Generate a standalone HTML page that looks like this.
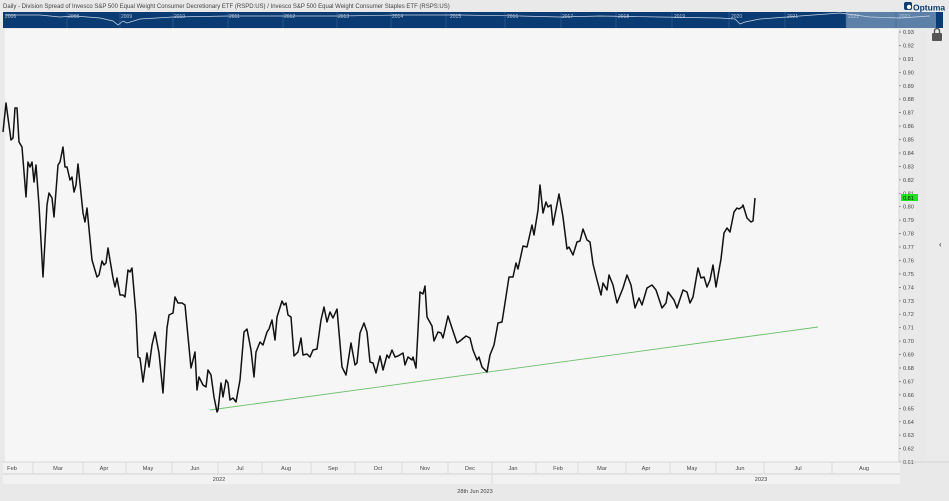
<!DOCTYPE html>
<html><head><meta charset="utf-8"><style>
html,body{margin:0;padding:0;background:#e9e9e9;width:949px;height:501px;overflow:hidden;font-family:"Liberation Sans",sans-serif}
svg{display:block}
</style></head><body>
<svg width="949" height="501" xmlns="http://www.w3.org/2000/svg" font-family="Liberation Sans, sans-serif">
<rect width="949" height="501" fill="#e9e9e9"/>
<text x="3" y="8" font-size="6" fill="#444">Daily - Division Spread of Invesco S&amp;P 500 Equal Weight Consumer Decretionary ETF (RSPD:US) / Invesco S&amp;P 500 Equal Weight Consumer Staples ETF (RSPS:US)</text>
<rect x="904" y="2" width="8" height="8" rx="2" fill="#0d3b72"/>
<circle cx="909" cy="7" r="2.2" fill="#fff"/>
<text x="913" y="10.5" font-size="8.5" font-weight="bold" fill="#0d3b72">Optuma</text>
<rect x="3" y="12" width="940" height="16" fill="#0b3b73"/>
<rect x="846" y="12" width="90" height="16" fill="#5d80a9"/>
<g stroke="#3a6394" stroke-width="0.6">
<line x1="67" y1="12" x2="67" y2="28"/><line x1="120" y1="12" x2="120" y2="28"/><line x1="173" y1="12" x2="173" y2="28"/><line x1="228" y1="12" x2="228" y2="28"/><line x1="283" y1="12" x2="283" y2="28"/><line x1="337" y1="12" x2="337" y2="28"/><line x1="391" y1="12" x2="391" y2="28"/><line x1="446" y1="12" x2="446" y2="28"/><line x1="505" y1="12" x2="505" y2="28"/><line x1="561" y1="12" x2="561" y2="28"/><line x1="616" y1="12" x2="616" y2="28"/><line x1="672" y1="12" x2="672" y2="28"/><line x1="729" y1="12" x2="729" y2="28"/><line x1="785" y1="12" x2="785" y2="28"/><line x1="846" y1="12" x2="846" y2="28"/><line x1="896" y1="12" x2="896" y2="28"/>
</g>
<g font-size="5" fill="#b8c8dc">
<text x="5" y="18">2006</text><text x="68" y="18">2008</text><text x="121" y="18">2009</text><text x="174" y="18">2010</text><text x="229" y="18">2011</text><text x="284" y="18">2012</text><text x="338" y="18">2013</text><text x="392" y="18">2014</text><text x="450" y="18">2015</text><text x="507" y="18">2016</text><text x="562" y="18">2017</text><text x="618" y="18">2018</text><text x="674" y="18">2019</text><text x="731" y="18">2020</text><text x="787" y="18">2021</text><text x="848" y="18">2022</text><text x="899" y="18">2023</text>
</g>
<polyline fill="none" stroke="#c9d6e6" stroke-width="0.7" points="5,15 40,15 60,17 75,16 100,18 113,21 118,25 123,21 127,23 140,19 173,17 230,16 290,16 340,16 400,15 460,15 520,16 560,17 600,16 660,17 720,18 735,19 740,24 745,22 760,19 800,16 840,13 870,17 900,18 930,16"/>
<rect x="5" y="29" width="894" height="433" fill="#f6f6f6"/>
<line x1="899" y1="29" x2="899" y2="462" stroke="#ccc" stroke-width="0.8"/>
<rect x="927" y="29" width="22" height="433" fill="#ebebeb"/>
<rect x="932" y="33" width="10" height="8" rx="1" fill="#555"/>
<path d="M934.5 33 v-2 a2.5 2.5 0 0 1 5 0 v2" fill="none" stroke="#555" stroke-width="1.4"/>
<text x="939" y="247" font-size="8" fill="#333">‹</text>
<g stroke="#777" stroke-width="0.7">
<path d="M899 32h2M899 45.4h2M899 58.9h2M899 72.3h2M899 85.8h2M899 99.2h2M899 112.6h2M899 126.1h2M899 139.5h2M899 153h2M899 166.4h2M899 179.8h2M899 193.3h2M899 206.7h2M899 220.2h2M899 233.6h2M899 247h2M899 260.5h2M899 273.9h2M899 287.4h2M899 300.8h2M899 314.2h2M899 327.7h2M899 341.1h2M899 354.6h2M899 368h2M899 381.4h2M899 394.9h2M899 408.3h2M899 421.8h2M899 435.2h2M899 448.6h2M899 462h2"/>
</g>
<g font-size="5.6" fill="#444">
<text x="903" y="34">0.93</text><text x="903" y="47.4">0.92</text><text x="903" y="60.9">0.91</text><text x="903" y="74.3">0.90</text><text x="903" y="87.8">0.89</text><text x="903" y="101.2">0.88</text><text x="903" y="114.6">0.87</text><text x="903" y="128.1">0.86</text><text x="903" y="141.5">0.85</text><text x="903" y="155">0.84</text><text x="903" y="168.4">0.83</text><text x="903" y="181.8">0.82</text><text x="903" y="195.3">0.81</text><text x="903" y="208.7">0.80</text><text x="903" y="222.2">0.79</text><text x="903" y="235.6">0.78</text><text x="903" y="249">0.77</text><text x="903" y="262.5">0.76</text><text x="903" y="275.9">0.75</text><text x="903" y="289.4">0.74</text><text x="903" y="302.8">0.73</text><text x="903" y="316.2">0.72</text><text x="903" y="329.7">0.71</text><text x="903" y="343.1">0.70</text><text x="903" y="356.6">0.69</text><text x="903" y="370">0.68</text><text x="903" y="383.4">0.67</text><text x="903" y="396.9">0.66</text><text x="903" y="410.3">0.65</text><text x="903" y="423.8">0.64</text><text x="903" y="437.2">0.63</text><text x="903" y="450.6">0.62</text><text x="903" y="464">0.61</text>
</g>
<rect x="901" y="194" width="17" height="7" fill="#22e022"/>
<text x="903" y="200" font-size="5.6" fill="#111">0.81</text>
<line x1="210" y1="410" x2="818" y2="327" stroke="#6cbf6c" stroke-width="0.9"/>
<polyline fill="none" stroke="#111" stroke-width="1.5" stroke-linejoin="round" points="3,132 6,103 11,140 13,138 15,108 17,108 19,142 22,147 26,197 28,162 30,167 32,162 34,182 36,165 39,205 43,277 47,205 49,193 52,198 54,217 58,165 60,162 63,147 65,167 67,167 70,180 72,177 74,192 76,185 78,164 83,213 85,222 87,208 92,260 97,277 99,275 102,261 104,265 106,263 108,248 113,278 115,287 117,278 120,295 123,295 125,297 128,270 130,272 132,268 136,315 138,357 140,358 143,382 147,353 149,367 152,345 155,332 159,353 163,393 167,328 169,315 173,313 175,297 178,303 182,303 185,305 191,368 195,352 197,390 199,377 203,385 206,387 208,370 211,375 214,397 217,412 218,410 221,383 223,397 226,380 228,383 230,400 233,398 236,402 240,380 244,332 247,329 251,350 254,377 256,352 260,342 263,345 267,332 269,329 272,320 275,340 277,317 282,301 284,305 286,303 288,315 291,317 294,356 298,352 301,338 303,355 307,354 310,357 313,350 317,349 321,320 324,307 327,322 330,312 333,318 337,309 342,367 346,375 351,343 355,365 357,363 360,333 364,323 367,332 370,362 373,363 376,373 380,356 383,370 387,355 389,358 392,350 395,357 398,356 403,353 405,365 408,357 412,360 413,357 416,368 420,292 423,294 425,286 427,317 432,326 434,341 438,332 441,333 443,338 448,316 457,343 460,341 466,336 470,338 473,350 477,360 479,357 482,367 487,372 490,355 494,345 498,323 502,322 505,303 509,277 513,277 516,263 518,269 523,246 527,247 532,225 534,235 538,210 540,185 543,213 546,202 548,207 551,205 553,225 559,194 563,217 567,249 569,247 573,255 577,242 580,241 583,229 587,240 590,242 593,264 597,280 601,295 603,283 607,290 609,275 613,285 617,303 623,288 627,275 631,285 635,308 639,298 642,305 647,288 652,285 656,290 662,308 666,303 668,292 674,300 677,308 683,290 687,292 690,303 693,297 698,268 701,278 704,277 707,287 710,280 713,265 716,287 721,259 724,233 727,228 730,232 734,212 737,208 739,209 742,207 743,205 747,218 751,222 753,221 755,198"/>
<rect x="3" y="462" width="897" height="11" fill="#f2f2f2"/>
<line x1="3" y1="462" x2="949" y2="462" stroke="#ccc" stroke-width="0.8"/>
<g stroke="#d0d0d0" stroke-width="0.7">
<line x1="33" y1="462" x2="33" y2="473"/><line x1="83" y1="462" x2="83" y2="473"/><line x1="126" y1="462" x2="126" y2="473"/><line x1="172" y1="462" x2="172" y2="473"/><line x1="218" y1="462" x2="218" y2="473"/><line x1="262" y1="462" x2="262" y2="473"/><line x1="311" y1="462" x2="311" y2="473"/><line x1="355" y1="462" x2="355" y2="473"/><line x1="402" y1="462" x2="402" y2="473"/><line x1="448" y1="462" x2="448" y2="473"/><line x1="492" y1="462" x2="492" y2="484"/><line x1="536" y1="462" x2="536" y2="473"/><line x1="578" y1="462" x2="578" y2="473"/><line x1="626" y1="462" x2="626" y2="473"/><line x1="670" y1="462" x2="670" y2="473"/><line x1="716" y1="462" x2="716" y2="473"/><line x1="764" y1="462" x2="764" y2="473"/><line x1="832" y1="462" x2="832" y2="473"/>
</g>
<rect x="3" y="473" width="897" height="2" fill="#e2e2e2"/>
<rect x="3" y="475" width="897" height="9" fill="#f2f2f2"/>
<line x1="492" y1="475" x2="492" y2="484" stroke="#d0d0d0" stroke-width="0.7"/>
<g font-size="5.6" fill="#444" text-anchor="middle">
<text x="12" y="470">Feb</text><text x="58" y="470">Mar</text><text x="104" y="470">Apr</text><text x="148" y="470">May</text><text x="195" y="470">Jun</text><text x="240" y="470">Jul</text><text x="286" y="470">Aug</text><text x="333" y="470">Sep</text><text x="378" y="470">Oct</text><text x="425" y="470">Nov</text><text x="470" y="470">Dec</text><text x="513" y="470">Jan</text><text x="558" y="470">Feb</text><text x="602" y="470">Mar</text><text x="646" y="470">Apr</text><text x="692" y="470">May</text><text x="740" y="470">Jun</text><text x="798" y="470">Jul</text><text x="864" y="470">Aug</text>
<text x="219" y="481">2022</text><text x="761" y="481">2023</text>
<text x="475" y="493">28th Jun 2023</text>
</g>
</svg>
</body></html>
